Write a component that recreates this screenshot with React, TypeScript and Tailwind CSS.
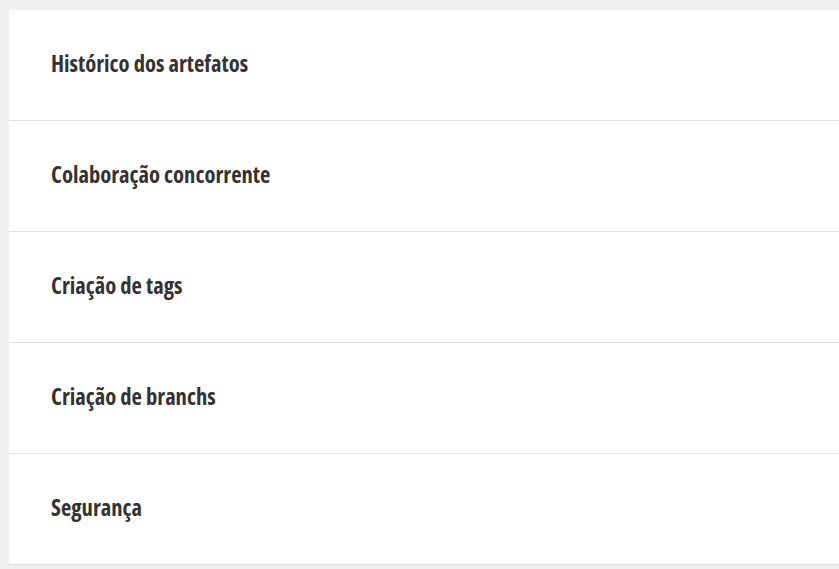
const items = [
  "Histórico dos artefatos",
  "Colaboração concorrente",
  "Criação de tags",
  "Criação de branchs",
  "Segurança",
];

export default function App() {
  return (
    <div className="min-h-screen bg-[#efefef] pt-[10px] pl-[9px] font-['Open_Sans',sans-serif]">
      <div className="bg-white">
        {items.map((item, index) => (
          <div
            key={index}
            className="flex h-[111px] items-center border-b border-[#dddddd] pb-[3px] pl-[42px]"
          >
            <h3 className="text-[22.6px] font-bold text-[#333333] [font-stretch:75%]">
              {item}
            </h3>
          </div>
        ))}
      </div>
    </div>
  );
}
